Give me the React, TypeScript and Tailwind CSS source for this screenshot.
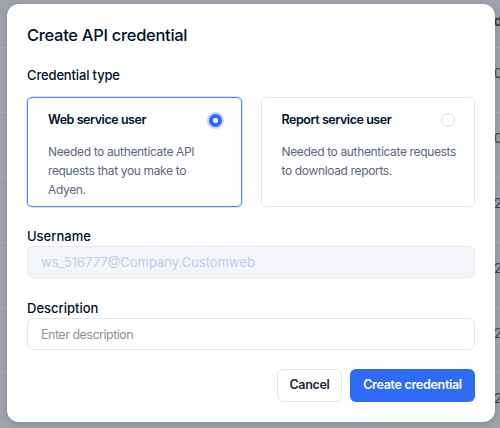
import React, { useState } from 'react';

const rowValues = ['08', '08', '22', '22', '22', '22'];

function Radio({ checked }: { checked: boolean }) {
  if (checked) {
    return (
      <span className="flex h-[13px] w-[13px] items-center justify-center rounded-full bg-[#2f6bf5] shadow-[0_0_0_2px_#c3d4fc]">
        <span className="h-[5px] w-[5px] rounded-full bg-white" />
      </span>
    );
  }
  return <span className="h-[14px] w-[14px] rounded-full border border-[#d9dce1] bg-white" />;
}

function TypeCard({
  title,
  text,
  selected,
  onSelect,
}: {
  title: string;
  text: string;
  selected: boolean;
  onSelect: () => void;
}) {
  return (
    <button
      type="button"
      onClick={onSelect}
      className={
        selected
          ? 'flex h-[110px] flex-col rounded-[5px] border border-[#5584f6] bg-white pl-[20px] pr-[12px] pt-[12px] text-left shadow-[0_0_0_1px_#dbe5fd]'
          : 'flex h-[110px] flex-col rounded-[5px] border border-[#e3e5e9] bg-white pl-[20px] pr-[12px] pt-[12px] text-left'
      }
    >
      <div className="mr-[7px] flex h-[20px] items-center justify-between">
        <span className="text-[12.5px] font-semibold tracking-[-0.45px] text-[#00112c]">{title}</span>
        <Radio checked={selected} />
      </div>
      <p className="mt-[12px] w-[175px] text-[12px] leading-[19px] tracking-[-0.35px] text-[#5c687c]">{text}</p>
    </button>
  );
}

export default function App() {
  const [type, setType] = useState<'web' | 'report'>('web');

  return (
    <div
      className="relative h-[428px] w-[500px] overflow-hidden bg-[#9ea2aa]"
      style={{ fontFamily: 'Inter, "Noto Sans", sans-serif' }}
    >
      {/* page behind the overlay */}
      <div className="flex flex-col">
        <div className="flex h-[48px] items-center justify-end border-b border-[#a9adb4] pb-[4px]">
          <span className="w-[6px] overflow-hidden text-[13px] font-semibold text-[#2b2f36]">d</span>
        </div>
        {rowValues.map((v, i) => (
          <div key={i} className="flex h-[65px] items-start justify-end border-b border-[#a9adb4] pt-[16px]">
            <span className="w-[6px] overflow-hidden whitespace-nowrap text-[13px] text-[#3b4048]">{v}</span>
          </div>
        ))}
      </div>

      {/* modal */}
      <div className="absolute left-[7px] top-[4px] flex h-[418px] w-[488px] flex-col rounded-[12px] bg-white px-[20px] pt-[19px] shadow-[0_2px_6px_rgba(0,0,0,0.15)]">
        <h2 className="text-[16.5px] font-medium leading-[24px] tracking-[-0.3px] text-[#00112c]">Create API credential</h2>

        <div className="mt-[18px] text-[13px] font-medium leading-[20px] tracking-[-0.15px] text-[#00112c]">Credential type</div>
        <div className="mt-[12px] grid grid-cols-2 gap-[19px]">
          <TypeCard
            title="Web service user"
            text="Needed to authenticate API requests that you make to Adyen."
            selected={type === 'web'}
            onSelect={() => setType('web')}
          />
          <TypeCard
            title="Report service user"
            text="Needed to authenticate requests to download reports."
            selected={type === 'report'}
            onSelect={() => setType('report')}
          />
        </div>

        <label className="mt-[19px] text-[13px] font-medium leading-[20px] text-[#00112c]">Username</label>
        <input
          disabled
          value="ws_516777@Company.Customweb"
          className="h-[32px] rounded-[6px] border border-[#e6e9ee] bg-[#f3f5f9] px-[13px] text-[13px] text-[#c4d0ea] outline-none"
        />

        <label className="mt-[20px] text-[13px] font-medium leading-[20px] text-[#00112c]">Description</label>
        <input
          placeholder="Enter description"
          className="h-[32px] rounded-[6px] border border-[#e3e5e9] bg-white px-[13px] text-[13px] text-[#00112c] outline-none placeholder:text-[12.5px] placeholder:tracking-[-0.5px] placeholder:text-[#8a93a2]"
        />

        <div className="mt-[19px] flex justify-end gap-[8px]">
          <button
            type="button"
            className="h-[33px] w-[65px] rounded-[6px] border border-[#e3e5e9] bg-white text-[12.5px] font-semibold tracking-[-0.3px] text-[#1c2434]"
          >
            Cancel
          </button>
          <button
            type="button"
            className="h-[33px] w-[125px] rounded-[6px] bg-[#2f6bf5] text-[12.5px] font-semibold tracking-[-0.3px] text-white"
          >
            Create credential
          </button>
        </div>
      </div>
    </div>
  );
}
